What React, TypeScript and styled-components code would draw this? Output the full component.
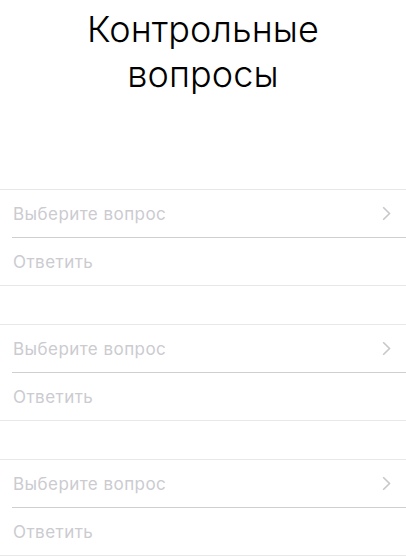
import React from "react";
import styled, { createGlobalStyle } from "styled-components";

const GlobalStyle = createGlobalStyle`
  html, body {
    margin: 0;
    padding: 0;
    background: #ffffff;
  }
  body {
    font-family: Inter, "Liberation Sans", sans-serif;
    -webkit-font-smoothing: antialiased;
  }
`;

const Screen = styled.div`
  display: flex;
  flex-direction: column;
  width: 406px;
  min-height: 558px;
  background: #ffffff;
`;

const Header = styled.header`
  height: 189px;
  display: flex;
  justify-content: center;
  padding-top: 7px;
  box-sizing: border-box;
`;

const Title = styled.h1`
  margin: 0;
  font-family: Inter, "Liberation Sans", sans-serif;
  font-weight: 300;
  font-size: 36px;
  line-height: 45px;
  color: #000000;
  text-align: center;
  letter-spacing: 0.1px;
`;

const Groups = styled.div`
  display: flex;
  flex-direction: column;
  gap: 38px;
`;

const Group = styled.section`
  border-top: 1px solid #e8e8eb;
  border-bottom: 1px solid #e8e8eb;
  background: #ffffff;
`;

const Row = styled.div<{ $divider?: boolean }>`
  height: 47px;
  display: flex;
  align-items: center;
  margin-left: 12px;
  padding-right: 15px;
  border-bottom: ${p => (p.$divider ? "1px solid #cfcfd3" : "none")};
`;

const Placeholder = styled.span`
  flex: 1;
  padding-left: 1px;
  font-size: 17px;
  font-weight: 400;
  letter-spacing: 0.45px;
  font-family: Inter, "Liberation Sans", sans-serif;
  color: #cbcbd0;
`;

const Chevron = () => (
  <svg width="9" height="15" viewBox="0 0 9 15" fill="none">
    <path d="M1.2 1.2 L7.5 7.5 L1.2 13.8" stroke="#c7c7cc" strokeWidth="1.6" />
  </svg>
);

const QuestionGroup: React.FC = () => (
  <Group>
    <Row $divider>
      <Placeholder>Выберите вопрос</Placeholder>
      <Chevron />
    </Row>
    <Row>
      <Placeholder>Ответить</Placeholder>
    </Row>
  </Group>
);

export default function App() {
  return (
    <Screen>
      <GlobalStyle />
      <Header>
        <Title>
          Контрольные
          <br />
          вопросы
        </Title>
      </Header>
      <Groups>
        <QuestionGroup />
        <QuestionGroup />
        <QuestionGroup />
      </Groups>
    </Screen>
  );
}
